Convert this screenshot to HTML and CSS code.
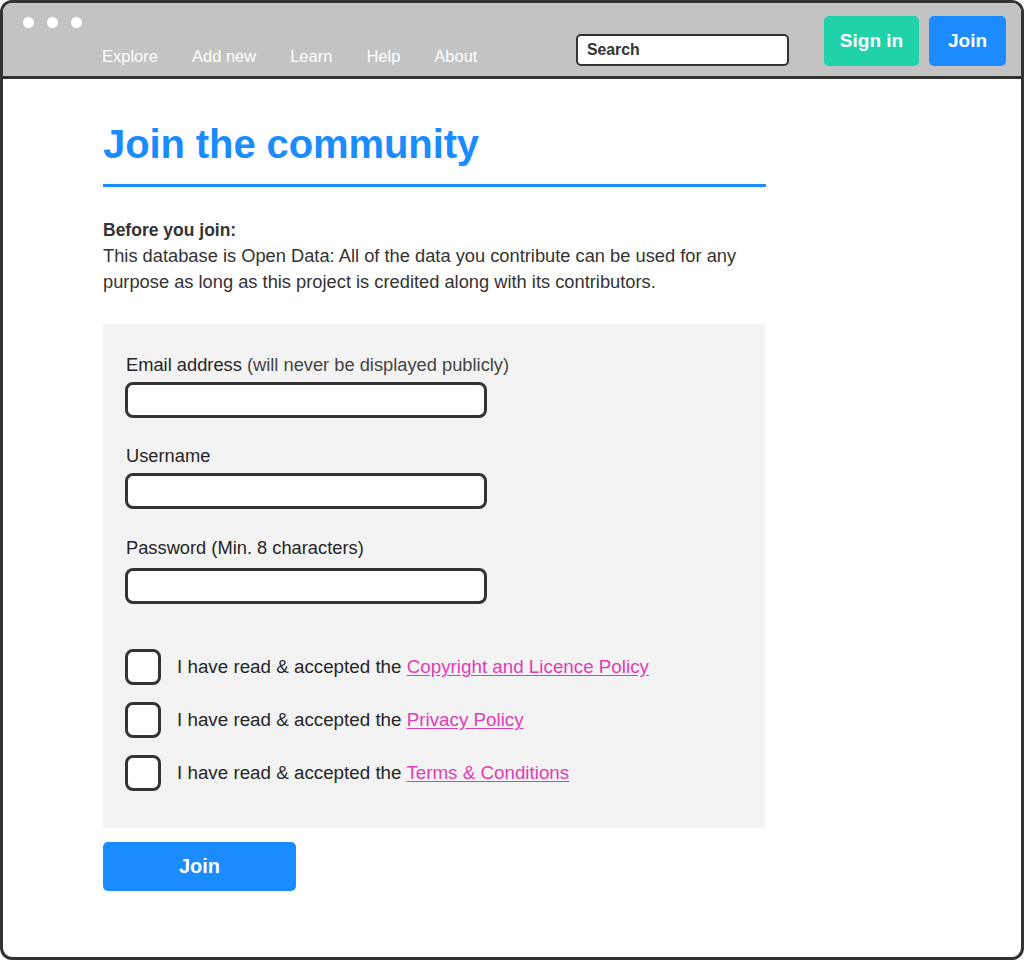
FILE: index.html
```html
<!DOCTYPE html>
<html lang="en">
<head>
<meta charset="utf-8">
<title>Join the community</title>
<link rel="stylesheet" href="styles.css">
</head>
<body>
<div class="window">
  <header class="topbar">
    <div class="left">
      <div class="dots"><span class="dot"></span><span class="dot"></span><span class="dot"></span></div>
      <nav class="nav">
        <a href="#">Explore</a>
        <a href="#">Add new</a>
        <a href="#">Learn</a>
        <a href="#">Help</a>
        <a href="#">About</a>
      </nav>
    </div>
    <div class="right">
      <input class="search" type="text" placeholder="Search">
      <a class="btn btn-signin" href="#">Sign in</a>
      <a class="btn btn-join" href="#">Join</a>
    </div>
  </header>
  <main class="content">
    <h1 class="title">Join the community</h1>
    <p class="intro-head">Before you join:</p>
    <p class="intro">This database is Open Data: All of the data you contribute can be used for any purpose as long as this project is credited along with its contributors.</p>
    <form class="form">
      <div class="field">
        <label class="label">Email address <span class="hint">(will never be displayed publicly)</span></label>
        <input class="text" type="text">
      </div>
      <div class="field">
        <label class="label">Username</label>
        <input class="text" type="text">
      </div>
      <div class="field field-pw">
        <label class="label">Password (Min. 8 characters)</label>
        <input class="text" type="password">
      </div>
      <div class="checks">
        <label class="check"><input type="checkbox" class="box"><span>I have read &amp; accepted the <a href="#">Copyright and Licence Policy</a></span></label>
        <label class="check"><input type="checkbox" class="box"><span>I have read &amp; accepted the <a href="#">Privacy Policy</a></span></label>
        <label class="check"><input type="checkbox" class="box"><span>I have read &amp; accepted the <a href="#">Terms &amp; Conditions</a></span></label>
      </div>
    </form>
    <button class="submit" type="button">Join</button>
  </main>
</div>
</body>
</html>
```

FILE: styles.css
```css
* { box-sizing: border-box; }
html, body { margin: 0; padding: 0; background: #fff; }
body { font-family: "Liberation Sans", Arial, sans-serif; color: #333; }

.window {
  width: 1024px;
  height: 960px;
  border: 3px solid #333;
  border-radius: 12px;
  overflow: hidden;
  background: #fff;
}

.topbar {
  height: 76px;
  background: #c3c3c3;
  border-bottom: 3px solid #333;
  display: flex;
}
.left {
  padding: 14px 0 0 20px;
}
.dots { display: flex; gap: 13px; height: 11px; }
.dot { width: 11px; height: 11px; border-radius: 50%; background: #fff; display: block; }
.nav {
  margin: 18px 0 0 79px;
  display: flex;
  gap: 34px;
  line-height: 20px;
}
.nav a {
  color: #fff;
  text-decoration: none;
  font-size: 16.5px;
}
.right {
  margin-left: auto;
  display: flex;
  align-items: flex-end;
  padding: 0 15px 10px 0;
}
.search {
  width: 213px;
  height: 32px;
  border: 2px solid #333;
  border-radius: 5px;
  background: #fff;
  padding: 0 0 0 9px;
  margin: 0 35px 0 0;
  font-family: "Liberation Sans", Arial, sans-serif;
  font-size: 15.8px;
  font-weight: bold;
  color: #333;
  outline: none;
}
.search::placeholder { color: #333; opacity: 1; }
.btn {
  height: 50px;
  border-radius: 5px;
  color: #fff;
  font-weight: bold;
  font-size: 19px;
  text-decoration: none;
  display: flex;
  align-items: center;
  justify-content: center;
}
.btn-signin { width: 95px; background: #1fd2a9; margin-right: 10px; }
.btn-join { width: 77px; background: #1a8cff; }

.content {
  padding: 0 0 0 100px;
  width: 763px;
}
.title {
  margin: 41px 0 0 0;
  font-size: 40px;
  line-height: 48px;
  font-weight: bold;
  color: #1a8cff;
  padding-bottom: 16px;
  border-bottom: 3px solid #1a8cff;
  letter-spacing: -0.1px;
}
.intro-head {
  margin: 30px 0 0 0;
  font-weight: bold;
  font-size: 17.5px;
  line-height: 26px;
}
.intro {
  margin: 0;
  font-size: 18.3px;
  line-height: 26px;
  width: 663px;
}
.form {
  margin: 29px 0 0 0;
  width: 662px;
  background: #f3f3f3;
  padding: 30px 23px 37px 22px;
}
.field { display: flex; flex-direction: column; align-items: flex-start; }
.field + .field { margin-top: 27px; }
.field.field-pw { margin-top: 28px; }
.label {
  font-size: 18.3px;
  line-height: 22px;
  color: #262626;
  margin: 0 0 6px 1px;
}
.field-pw .label { margin-bottom: 9px; }
.hint { color: #444; }
.text {
  width: 362px;
  height: 36px;
  border: 3px solid #333;
  border-radius: 8px;
  background: #fff;
  margin: 0;
  outline: none;
}
.checks {
  margin-top: 45px;
  display: flex;
  flex-direction: column;
  gap: 17px;
}
.check {
  display: flex;
  align-items: center;
  gap: 16px;
  font-size: 18.8px;
  line-height: 22px;
  color: #262626;
}
.box {
  appearance: none;
  -webkit-appearance: none;
  width: 36px;
  height: 36px;
  border: 3px solid #333;
  border-radius: 8px;
  background: #fff;
  margin: 0;
  flex: none;
}
.check a {
  color: #e13db5;
  text-decoration: underline;
  text-underline-offset: 2px;
}
.submit {
  margin-top: 14px;
  width: 193px;
  height: 49px;
  border: none;
  border-radius: 5px;
  background: #1a8cff;
  color: #fff;
  font-family: "Liberation Sans", Arial, sans-serif;
  font-weight: bold;
  font-size: 20px;
  display: block;
}
```
